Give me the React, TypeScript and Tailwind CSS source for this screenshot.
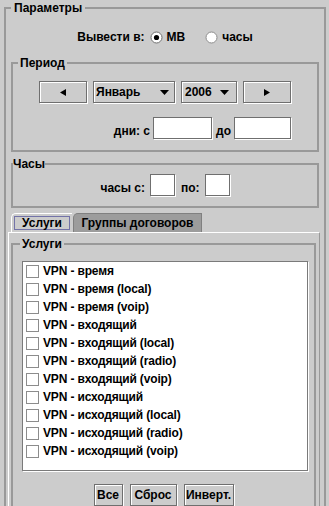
import type { ReactNode } from 'react';

const raised = 'border border-[#6f6f6f] shadow-[inset_1px_1px_0_#fff,1px_1px_0_#fff]';

const Group = ({
  title,
  className,
  legendClass,
  children,
}: {
  title: string;
  className: string;
  legendClass: string;
  children: ReactNode;
}) => (
  <fieldset className={`border-2 border-[#999999] ${className}`}>
    <legend className={`leading-[14px] ${legendClass}`}>{title}</legend>
    {children}
  </fieldset>
);

const Radio = ({ checked }: { checked?: boolean }) => (
  <svg width="13" height="13" viewBox="0 0 13 13" className="shrink-0">
    <circle cx="6.5" cy="6.5" r="5.5" fill="#ffffff" stroke={checked ? '#6f6f6f' : '#8c8c8c'} />
    {checked && <circle cx="6.5" cy="6.5" r="2.6" fill="#000" />}
  </svg>
);

const Arrow = ({ dir }: { dir: 'left' | 'right' }) => (
  <svg width="6" height="7" viewBox="0 0 6 7">
    <polygon points={dir === 'left' ? '0,3.5 6,0 6,7' : '6,3.5 0,0 0,7'} fill="#000" />
  </svg>
);

const Down = () => (
  <svg width="9" height="5" viewBox="0 0 9 5">
    <polygon points="0,0 9,0 4.5,5" fill="#000" />
  </svg>
);

const Field = ({ w }: { w: string }) => <div className={`h-[22px] bg-white ${raised} ${w}`} />;

const Button = ({ w, children }: { w: string; children: ReactNode }) => (
  <div className={`flex h-[22px] items-center justify-center bg-[#cccccc] ${raised} ${w}`}>{children}</div>
);

const services = [
  'VPN - время',
  'VPN - время (local)',
  'VPN - время (voip)',
  'VPN - входящий',
  'VPN - входящий (local)',
  'VPN - входящий (radio)',
  'VPN - входящий (voip)',
  'VPN - исходящий',
  'VPN - исходящий (local)',
  'VPN - исходящий (radio)',
  'VPN - исходящий (voip)',
];

export default function App() {
  return (
    <div className="h-[506px] w-[329px] overflow-hidden bg-[#cccccc] font-['Liberation_Sans_Narrow','Liberation_Sans',Arial,sans-serif] text-[12px] font-bold leading-[14px] text-black">
      <Group title="Параметры" className="ml-[4px] mt-[1px] w-[322px]" legendClass="ml-[5px] px-[3px]">
        <div className="mt-[13px] flex h-[18px] items-center justify-center">
          <span className="mr-[5px]">Вывести в:</span>
          <Radio checked />
          <span className="ml-[4px] mr-[20px]">МВ</span>
          <Radio />
          <span className="ml-[4px]">часы</span>
        </div>

        <Group title="Период" className="mx-[5px] mt-[10px] pb-[10px]" legendClass="ml-[5px] px-[2px]">
          <div className="mt-[11px] flex h-[23px] justify-center gap-[6px]">
            <Button w="w-[48px]">
              <Arrow dir="left" />
            </Button>
            <div className={`flex h-[22px] w-[82px] items-center justify-between bg-[#cccccc] pl-[2px] pr-[5px] ${raised}`}>
              <span>Январь</span>
              <Down />
            </div>
            <div className={`flex h-[22px] w-[56px] items-center justify-between bg-[#cccccc] pl-[3px] pr-[7px] ${raised}`}>
              <span>2006</span>
              <Down />
            </div>
            <Button w="w-[48px]">
              <Arrow dir="right" />
            </Button>
          </div>
          <div className="mt-[13px] flex h-[23px] items-start justify-end gap-[3px] pr-[26px]">
            <span className="mt-[7px]">дни: с</span>
            <Field w="w-[59px]" />
            <span className="ml-[1px] mt-[7px]">до</span>
            <Field w="w-[57px]" />
          </div>
        </Group>

        <Group title="Часы" className="mx-[5px] mt-[5px] pb-[9px]" legendClass="ml-0 px-0">
          <div className="mt-[3px] flex h-[23px] items-start justify-center gap-[5px]">
            <span className="mt-[7px]">часы с:</span>
            <Field w="w-[25px]" />
            <span className="ml-[1px] mt-[7px]">по:</span>
            <Field w="w-[25px]" />
          </div>
        </Group>

        <div className="ml-[5px] mt-[5px] flex h-[19px] items-stretch">
          <div className="flex w-[61px] items-center justify-center rounded-tl-[5px] border-l border-t border-white bg-[#cccccc] p-[2px]">
            <div className="flex h-full w-full items-center justify-center border border-[#7373a8]">Услуги</div>
          </div>
          <div className="ml-[1px] flex w-[129px] items-center justify-center rounded-tl-[5px] border border-b-0 border-[#808080] bg-[#9c9c9c]">
            Группы договоров
          </div>
        </div>

        <div className="ml-[2px] mr-[4px] h-[300px] border-l border-r border-t border-white border-r-[#999999]">
          <Group title="Услуги" className="ml-[2px] mr-[3px] mt-[4px] pb-[20px]" legendClass="ml-[7px] px-[2px]">
            <div className="ml-[9px] mr-[6px] mt-[10px] h-[210px] border border-[#7a7a7a] bg-white shadow-[1px_1px_0_#fff]">
              {services.map((s) => (
                <div key={s} className="flex h-[18px] items-center pl-[3px]">
                  <div className="h-[13px] w-[13px] shrink-0 border border-[#8c8c8c] bg-white" />
                  <span className="ml-[4px] tracking-[-0.15px]">{s}</span>
                </div>
              ))}
            </div>
            <div className="mt-[13px] flex justify-center gap-[7px]">
              <Button w="w-[29px]">Все</Button>
              <Button w="w-[47px]">Сброс</Button>
              <Button w="w-[50px]">Инверт.</Button>
            </div>
          </Group>
        </div>
      </Group>
    </div>
  );
}
